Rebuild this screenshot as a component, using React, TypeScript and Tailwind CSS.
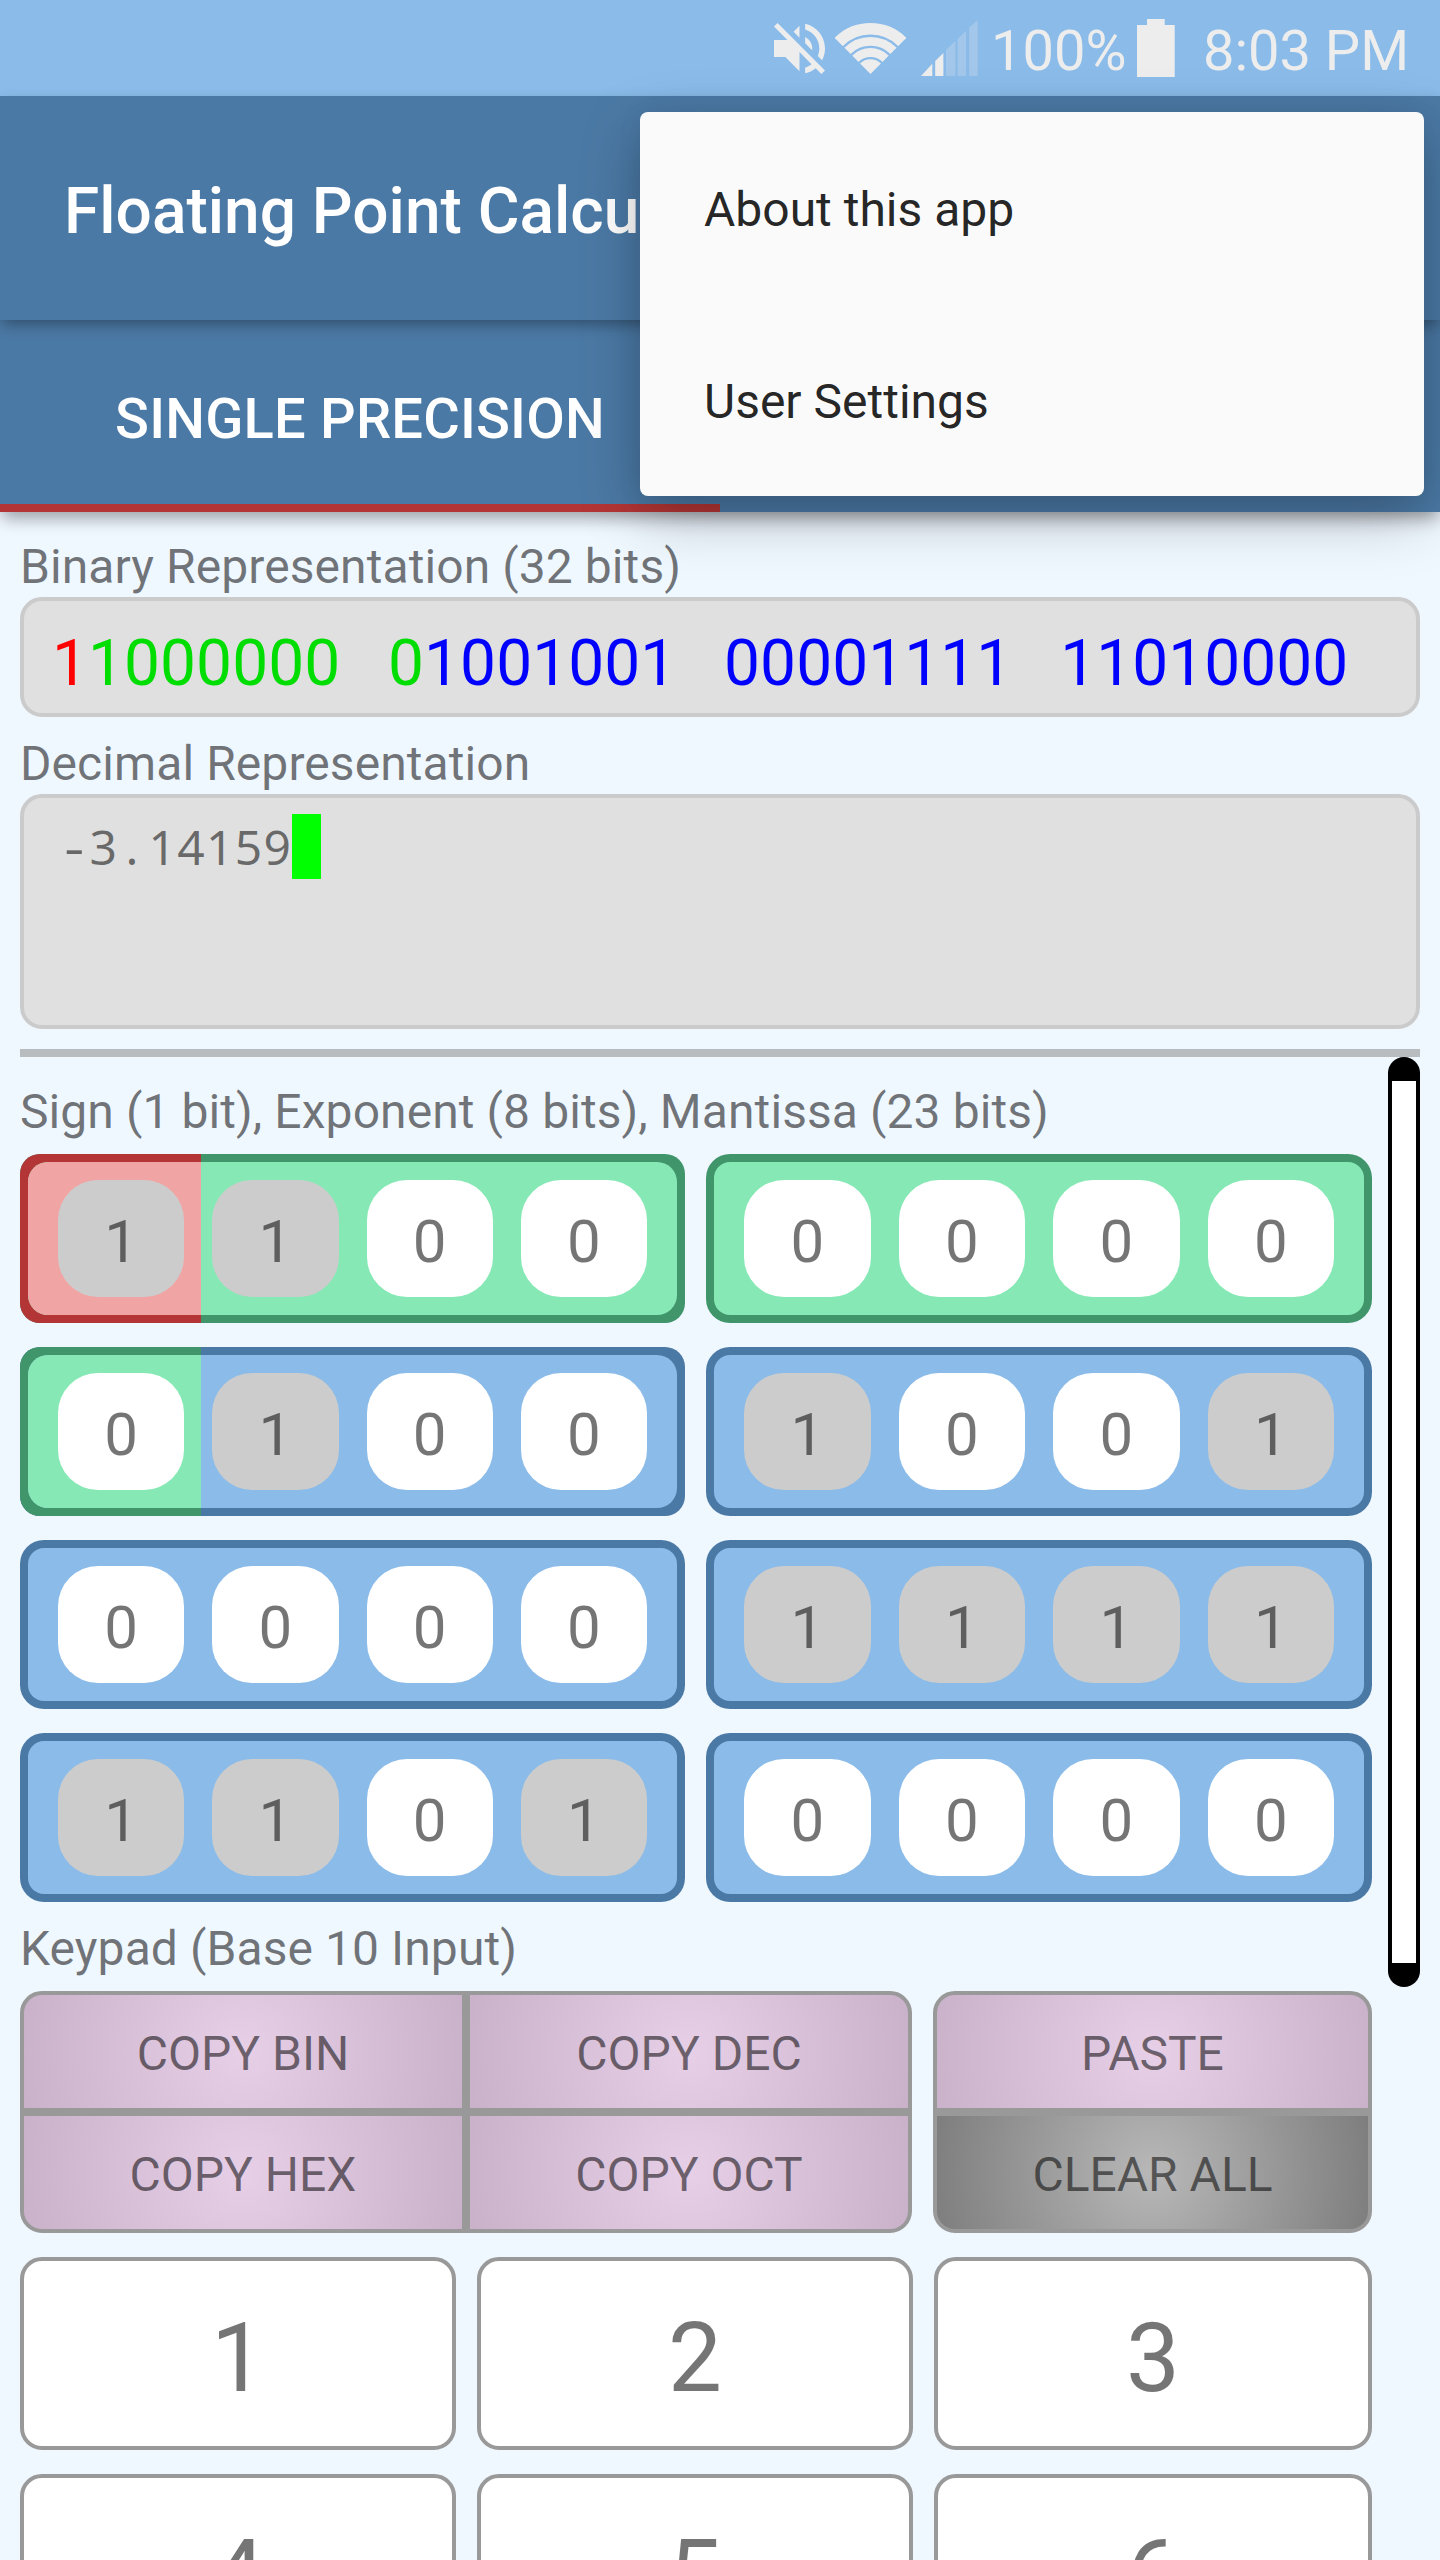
import React from "react";

type Tone = "red" | "green" | "blue";

const BORDER: Record<Tone, string> = {
  red: "bg-[#b33535]",
  green: "bg-[#41956a]",
  blue: "bg-[#4b79a5]",
};

const FILL: Record<Tone, string> = {
  red: "bg-[#f0a4a4]",
  green: "bg-[#86e9b5]",
  blue: "bg-[#8abbe9]",
};

const NIBBLES: { bits: string; lead: Tone; rest: Tone }[] = [
  { bits: "1100", lead: "red", rest: "green" },
  { bits: "0000", lead: "green", rest: "green" },
  { bits: "0100", lead: "green", rest: "blue" },
  { bits: "1001", lead: "blue", rest: "blue" },
  { bits: "0000", lead: "blue", rest: "blue" },
  { bits: "1111", lead: "blue", rest: "blue" },
  { bits: "1101", lead: "blue", rest: "blue" },
  { bits: "0000", lead: "blue", rest: "blue" },
];

function MuteIcon() {
  return (
    <svg className="h-[51px] w-[51px]" viewBox="3 3 18 18" fill="#ededed">
      <path d="M16.5 12c0-1.77-1.02-3.29-2.5-4.03v2.21l2.45 2.45c.03-.2.05-.41.05-.63zm2.5 0c0 .94-.2 1.82-.54 2.64l1.51 1.51C20.63 14.91 21 13.5 21 12c0-4.28-2.99-7.86-7-8.77v2.06c2.89.86 5 3.54 5 6.71zM4.27 3L3 4.27 7.73 9H3v6h4l5 5v-6.73l4.25 4.25c-.67.52-1.42.93-2.25 1.18v2.06c1.38-.31 2.63-.95 3.69-1.81L19.73 21 21 19.73l-9-9L4.27 3zM12 4L9.91 6.09 12 8.18V4z" />
    </svg>
  );
}

function WifiIcon() {
  return (
    <svg className="h-[51px] w-[71px]" viewBox="0 0 71 51" fill="none" stroke="#ededed">
      <clipPath id="wifi-sector">
        <path d="M35.5 51 L-1 14.3 V-2 H72 V14.3 Z" />
      </clipPath>
      <g clipPath="url(#wifi-sector)">
        <circle cx="35.5" cy="51" r="45.2" strokeWidth="11.6" />
        <circle cx="35.5" cy="51" r="32.7" strokeWidth="8.8" />
        <circle cx="35.5" cy="51" r="21.5" strokeWidth="8.8" />
        <circle cx="35.5" cy="51" r="14.8" fill="#ededed" stroke="none" />
      </g>
    </svg>
  );
}

function SignalIcon() {
  return (
    <svg className="h-[56px] w-[57px]" viewBox="0 0 57 56" fill="#ededed">
      <path d="M0 56 L11.3 43.8 V56 Z" />
      <path d="M14.2 56 V41 L22.4 33 V56 Z" />
      <g opacity="0.25">
        <path d="M25 56 V30 L34.4 21 V56 Z" />
        <path d="M36.6 56 V19 L45.1 10.5 V56 Z" />
        <path d="M48.2 56 V7.5 L56.7 0 V56 Z" />
      </g>
    </svg>
  );
}

function BatteryIcon() {
  return (
    <svg className="h-[58px] w-[38px]" viewBox="0 0 38 58" fill="#ededed">
      <path d="M10 0 H27.7 V6 H37.7 V58 H0 V6 H10 Z" />
    </svg>
  );
}

function StatusBar() {
  return (
    <div className="flex h-24 shrink-0 items-center bg-[#8abbe9] pl-[774px] text-[56px] leading-none whitespace-nowrap text-[#ededed]">
      <MuteIcon />
      <div className="ml-2.5">
        <WifiIcon />
      </div>
      <div className="ml-[15px]">
        <SignalIcon />
      </div>
      <span className="ml-[13px] w-[132px] pt-[5px]">100%</span>
      <div className="ml-[14px]">
        <BatteryIcon />
      </div>
      <span className="ml-[28px] pt-[5px]">8:03 PM</span>
    </div>
  );
}

function Label({ children, className }: { children: React.ReactNode; className: string }) {
  return (
    <div className={`flex shrink-0 items-end text-[48px] leading-[56px] tracking-[0.08px] whitespace-nowrap text-black/54 ${className}`}>
      {children}
    </div>
  );
}

function Nibble({ bits, lead, rest }: { bits: string; lead: Tone; rest: Tone }) {
  const split = lead !== rest;
  return (
    <div
      className={`relative flex h-[169px] overflow-hidden p-2 ${BORDER[rest]} ${split ? "rounded-[20px]" : "rounded-[24px]"}`}
    >
      {split && <div className={`absolute inset-y-0 left-0 w-[181px] ${BORDER[lead]}`} />}
      <div
        className={`relative flex flex-1 gap-7 overflow-hidden px-[30px] py-[18px] ${FILL[rest]} ${split ? "rounded-[20px]" : "rounded-[16px]"}`}
      >
        {split && <div className={`absolute inset-y-0 left-0 w-[173px] ${FILL[lead]}`} />}
        {bits.split("").map((bit, i) => (
          <div
            key={i}
            className={`relative flex flex-1 items-center justify-center rounded-[40px] pt-[6px] text-[60px] leading-none text-black/54 ${bit === "1" ? "bg-[#cccccc]" : "bg-white"}`}
          >
            {bit}
          </div>
        ))}
      </div>
    </div>
  );
}

function PadButton({ label, dark }: { label: string; dark?: boolean }) {
  return (
    <div
      className={`flex flex-1 items-center justify-center pt-[4px] text-[48px] leading-none whitespace-nowrap text-black/54 ${
        dark
          ? "bg-[radial-gradient(circle_230px_at_center,#b8b8b8,#7c7c7c)]"
          : "bg-[radial-gradient(circle_230px_at_center,#e7cfe7,#c8b1c9)]"
      }`}
    >
      {label}
    </div>
  );
}

function Key({ label }: { label: string }) {
  return (
    <div className="flex h-[193px] items-center justify-center rounded-[22px] border-4 border-[#999999] bg-white pt-[9px] text-[96px] leading-none text-black/54">
      {label}
    </div>
  );
}

function OverflowMenu() {
  return (
    <div className="absolute top-28 left-[640px] z-30 w-[784px] rounded-lg bg-[#fafafa] text-[48px] leading-none text-black/87 shadow-[0_20px_60px_rgba(0,0,0,0.26),0_4px_28px_rgba(0,0,0,0.06)]">
      <div className="flex h-48 items-center px-16 pt-[3px]">About this app</div>
      <div className="flex h-48 items-center px-16 pt-[3px]">User Settings</div>
    </div>
  );
}

export default function App() {
  return (
    <div className="relative flex h-[2560px] w-[1440px] flex-col overflow-hidden bg-[#eff7ff] font-['Roboto',sans-serif]">
      <StatusBar />
      <header className="relative z-20 flex h-56 shrink-0 items-center bg-[#4b79a5] pt-[8px] pl-16 text-[64px] leading-none font-medium whitespace-nowrap text-white shadow-[0_6px_14px_-2px_rgba(0,0,0,0.36)]">
        Floating Point Calculator
      </header>
      <nav className="relative z-10 flex h-48 shrink-0 bg-[#4b79a5] text-[56px] leading-none font-medium whitespace-nowrap text-white shadow-[0_8px_16px_-2px_rgba(0,0,0,0.36)]">
        <div className="flex w-1/2 items-center justify-center border-b-8 border-[#b33535] pt-[14px] tracking-[0.2px]">
          SINGLE PRECISION
        </div>
        <div className="w-1/2" />
      </nav>

      <main className="flex flex-1 flex-col px-5">
        <Label className="h-[85px] pb-[2px]">Binary Representation (32 bits)</Label>
        <div className="flex h-[120px] shrink-0 items-center rounded-[22px] border-4 border-[#cbcbcb] bg-[#e0e0e0] pt-[13px] pl-7 text-[64px] leading-none tracking-[0.06px] whitespace-pre">
          <div>
            <span className="text-[#ff0000]">1</span>
            <span className="text-[#00dd00]">1000000{"   "}0</span>
            <span className="text-[#0000ff]">1001001{"   "}00001111{"   "}11010000</span>
          </div>
        </div>
        <Label className="h-[77px] pb-[2px]">Decimal Representation</Label>
        <div className="flex h-[235px] shrink-0 items-start rounded-[22px] border-4 border-[#cbcbcb] bg-[#e0e0e0] pt-4 pl-9 font-['Noto_Sans',sans-serif] text-[48px] leading-[65px] text-black/54">
          <span className="w-[28.8px] scale-x-[1.3] text-center">-</span>
          <span className="w-[28.8px] text-center">3</span>
          <span className="w-[28.8px] text-center">.</span>
          <span className="ml-0.5 w-[144px] tracking-[1.35px]">14159</span>
          <span className="h-[65px] w-[29px] bg-[#00ff00]" />
        </div>
        <div className="mt-5 h-2 shrink-0 bg-[#b8bcbf]" />

        <div className="flex gap-4">
          <div className="flex w-[1352px] flex-col">
            <Label className="h-[97px] pb-[14px]">Sign (1 bit), Exponent (8 bits), Mantissa (23 bits)</Label>
            <div className="grid grid-cols-[665px_666px] gap-x-[21px] gap-y-6">
              {NIBBLES.map((n, i) => (
                <Nibble key={i} {...n} />
              ))}
            </div>
            <Label className="h-[89px] pb-[14px]">Keypad (Base 10 Input)</Label>
            <div className="flex gap-[21px]">
              <div className="grid h-[242px] w-[892px] grid-cols-2 gap-2 overflow-hidden rounded-[22px] border-4 border-[#999999] bg-[#999999]">
                <PadButton label="COPY BIN" />
                <PadButton label="COPY DEC" />
                <PadButton label="COPY HEX" />
                <PadButton label="COPY OCT" />
              </div>
              <div className="flex h-[242px] flex-1 flex-col gap-2 overflow-hidden rounded-[22px] border-4 border-[#999999] bg-[#999999]">
                <PadButton label="PASTE" />
                <PadButton label="CLEAR ALL" dark />
              </div>
            </div>
            <div className="mt-6 grid grid-cols-[436px_436px_438px] gap-x-[21px] gap-y-6">
              {["1", "2", "3", "4", "5", "6"].map((k) => (
                <Key key={k} label={k} />
              ))}
            </div>
          </div>
          <div className="flex h-[930px] w-8 shrink-0 rounded-full bg-black px-1 py-6">
            <div className="flex-1 bg-white" />
          </div>
        </div>
      </main>

      <OverflowMenu />
    </div>
  );
}
